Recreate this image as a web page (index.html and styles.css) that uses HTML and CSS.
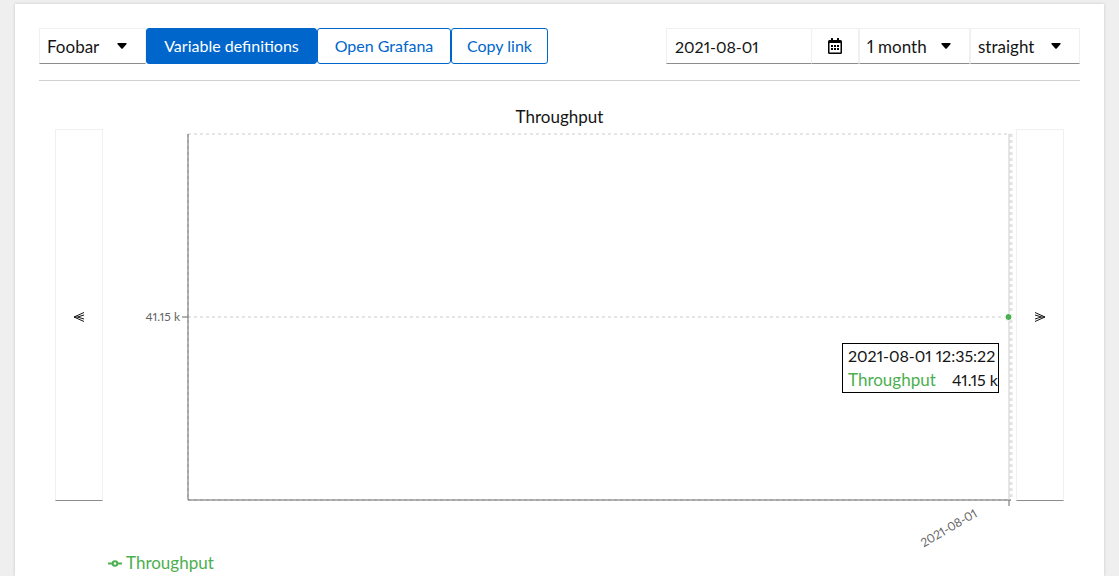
FILE: index.html
```html
<!DOCTYPE html>
<html lang="en">
<head>
<meta charset="utf-8">
<meta name="viewport" content="width=device-width, initial-scale=1">
<title>Throughput</title>
<link rel="stylesheet" href="styles.css">
</head>
<body>
<main class="card">
  <div class="toolbar">
    <div class="group">
      <div class="select test">
        <select class="field" aria-label="Test"><option>Foobar</option></select>
        <svg class="caret" viewBox="0 0 10 6" aria-hidden="true"><path d="M1 0h8q1 0 .6 .9L5.7 5.5q-.7 .6-1.4 0L.4 .9Q0 0 1 0z"/></svg>
      </div>
      <button class="button primary" type="button">Variable definitions</button>
      <button class="button grafana" type="button">Open Grafana</button>
      <button class="button" type="button">Copy link</button>
    </div>
    <div class="group">
      <input class="field date" type="text" value="2021-08-01" aria-label="End date">
      <button class="field picker" type="button" aria-label="Toggle date picker">
        <svg class="calendar" viewBox="0 0 14 16" aria-hidden="true"><path fill-rule="evenodd" d="M1.500 2H3V.4q0-.4.4-.4h1.200q.4 0 .4.400V2h4V.4q0-.4.4-.4h1.200q.4 0 .4.400V2h1.500Q14 2 14 3.500v11q0 1.500-1.500 1.500h-11Q0 16 0 14.500v-11Q0 2 1.500 2zM1.500 5v9.300q0 .2.2.2h10.600q.2 0 .2-.2V5zM3 7h2v2H3zM6 7h2v2H6zM9 7h2v2H9zM3 10h2v2H3zM6 10h2v2H6zM9 10h2v2H9z"/></svg>
      </button>
      <div class="select range">
        <select class="field" aria-label="Range"><option>1 month</option></select>
        <svg class="caret" viewBox="0 0 10 6" aria-hidden="true"><path d="M1 0h8q1 0 .6 .9L5.7 5.5q-.7 .6-1.4 0L.4 .9Q0 0 1 0z"/></svg>
      </div>
      <div class="select">
        <select class="field" aria-label="Line type"><option>straight</option></select>
        <svg class="caret" viewBox="0 0 10 6" aria-hidden="true"><path d="M1 0h8q1 0 .6 .9L5.7 5.5q-.7 .6-1.4 0L.4 .9Q0 0 1 0z"/></svg>
      </div>
    </div>
  </div>

  <section class="panel">
    <h2 class="title">Throughput</h2>
    <div class="chart-row">
      <button class="field step" type="button" aria-label="Earlier">
        <svg class="chevrons" viewBox="0 0 12 12" aria-hidden="true"><path d="M11 1.500 1 6l10 4.500M11 4 4.500 6l6.500 2M1 6H4.500"/></svg>
      </button>
      <div class="chart">
        <svg class="plot" viewBox="0 0 913 422" role="img" aria-label="Throughput chart">
          <path class="grid" d="M85 5H908M85 188H908M85 371H908M85 5V371"/>
          <path class="grid right" d="M908 5V371"/>
          <path class="axis" d="M85 5V371H908M79 188H85M906 371V377"/>
          <path class="cursor" d="M906 5V371"/>
          <circle class="dot" cx="905.500" cy="188" r="3.500"/>
          <text class="tick" x="77" y="192" text-anchor="end">41.15 k</text>
          <text class="tick" text-anchor="end" transform="translate(875 387) rotate(-30)">2021-08-01</text>
        </svg>
        <div class="tooltip">
          <div>2021-08-01 12:35:22</div>
          <div class="reading"><span class="series">Throughput</span><span>41.15 k</span></div>
        </div>
      </div>
      <button class="field step" type="button" aria-label="Later">
        <svg class="chevrons" viewBox="0 0 12 12" aria-hidden="true"><path d="M1 1.500 11 6 1 10.500M1 4 7.500 6 1 8M11 6H7.500"/></svg>
      </button>
    </div>
    <div class="legend">
      <svg class="marker" viewBox="0 0 14 14" aria-hidden="true"><path d="M0 7.500H4.700A2.300 2.300 0 1 1 9.300 7.500H14M9.300 7.500A2.300 2.300 0 1 1 4.700 7.500"/></svg>
      <span class="series">Throughput</span>
    </div>
  </section>
</main>
</body>
</html>
```
FILE: styles.css
```css
* {
  box-sizing: border-box;
}

body {
  margin: 0;
  padding: 4px 15px 0;
  background: #efefef;
  color: #151515;
  font: 16px/24px Lato, "Open Sans", sans-serif;
  font-variant-numeric: proportional-nums;
}

.card {
  min-height: calc(100vh - 4px);
  padding: 24px 24px 0;
  background: #fff;
  box-shadow: 0 0 3px rgba(0, 0, 0, 0.16);
}

.toolbar {
  display: flex;
  justify-content: space-between;
  padding-bottom: 16px;
  border-bottom: 1px solid #d2d2d2;
}

.group {
  display: flex;
}

.field {
  margin: 0;
  padding: 0 8px;
  border: 1px solid #f0f0f0;
  border-bottom-color: #8a8d90;
  border-radius: 0;
  background: #fff;
  color: inherit;
  font: inherit;
  appearance: none;
}

.select {
  display: grid;
  grid-template-columns: 1fr 29px;
  align-items: center;
  width: 110px;
}

.select .field {
  grid-area: 1 / 1 / 2 / 3;
  height: 36px;
  padding: 1px 7px 0;
  font-size: 17px;
}

.test {
  width: 107px;
}

.range {
  width: 111px;
}

.caret {
  grid-area: 1 / 2;
  width: 10px;
  height: 6px;
  pointer-events: none;
}

.date {
  width: 146px;
  height: 36px;
}

.picker {
  width: 48px;
  height: 36px;
  margin-left: -1px;
}

.calendar {
  display: block;
  width: 14px;
  height: 16px;
  margin: 0 auto;
}

.button {
  min-width: 97px;
  height: 36px;
  padding: 0 0 1px;
  border: 1px solid #06c;
  border-radius: 3px;
  background: #fff;
  color: #06c;
  font: inherit;
}

.primary {
  min-width: 171px;
  background: #06c;
  color: #fff;
}

.grafana {
  min-width: 134px;
}

.panel {
  padding: 24px 16px 0;
}

.title {
  margin: 0;
  font-size: 17px;
  font-weight: 400;
  text-align: center;
}

.chart-row {
  display: flex;
  align-items: flex-start;
}

.step {
  flex: none;
  width: 48px;
  height: 372px;
  padding-top: 3px;
}

.chevrons {
  display: block;
  width: 12px;
  height: 12px;
  margin: 0 auto;
  fill: none;
  stroke: #151515;
}

.chart {
  position: relative;
  flex: 1;
}

.plot {
  display: block;
  width: 100%;
}

.grid {
  fill: none;
  stroke: #ccc;
  stroke-dasharray: 3 3;
}

.right {
  stroke: #e2e2e2;
  stroke-width: 3;
}

.axis {
  fill: none;
  stroke: #666;
}

.cursor {
  stroke: #ccc;
}

.dot {
  fill: #4caf50;
  stroke: #fff;
}

.tick {
  fill: #666;
  font-size: 12px;
}

.tooltip {
  position: absolute;
  top: 214px;
  right: 17px;
  width: 157px;
  padding-left: 5px;
  border: 1px solid #000;
  background: #fff;
  white-space: nowrap;
}

.reading {
  display: flex;
  justify-content: space-between;
}

.series {
  color: #4caf50;
  font-size: 17px;
}

.legend {
  display: flex;
  align-items: center;
  gap: 4px;
  padding-left: 53px;
}

.marker {
  width: 14px;
  height: 14px;
  fill: none;
  stroke: #4caf50;
  stroke-width: 2;
}
```
